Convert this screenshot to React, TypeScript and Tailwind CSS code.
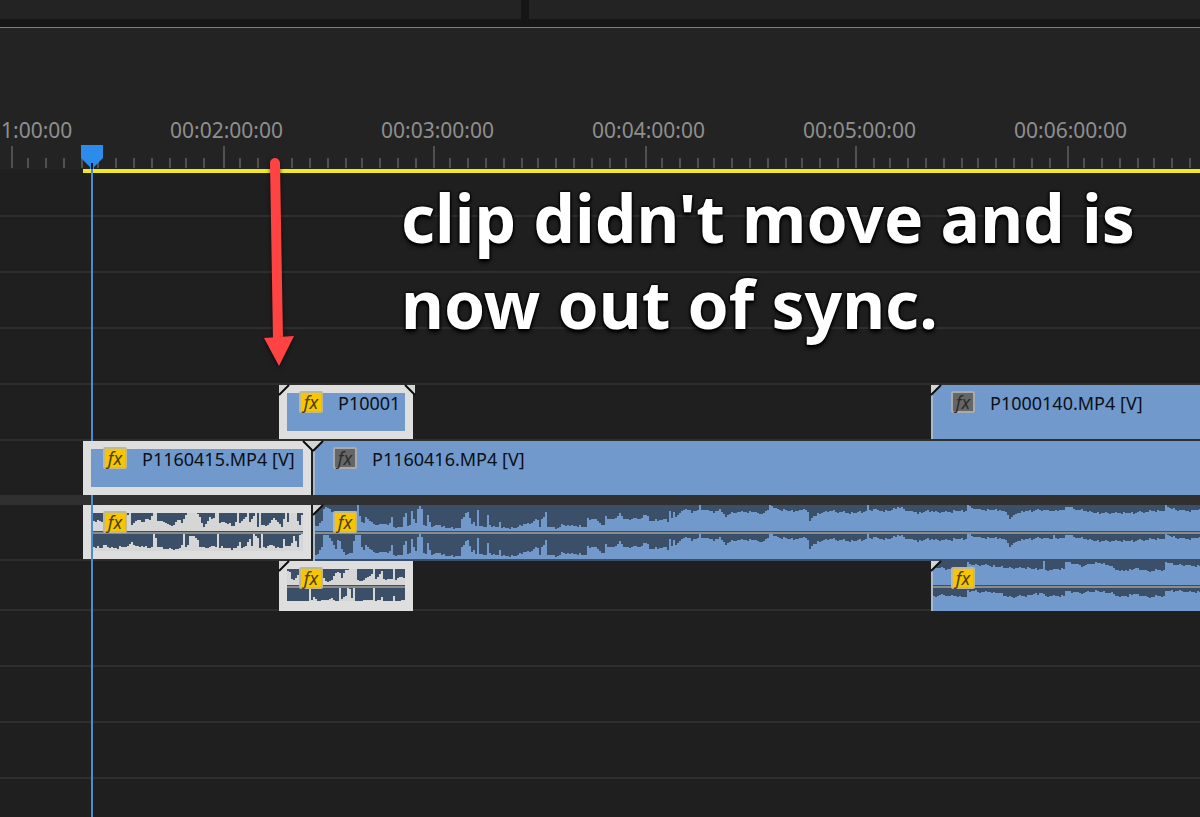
import React from 'react';

type Point = [number, number];

interface Wave {
  top: Point[];
  bottom: Point[];
}

const TIMECODES = ['00:02:00:00', '00:03:00:00', '00:04:00:00', '00:05:00:00', '00:06:00:00'];

// [timeline position, level] pairs for the two channels of each audio clip
const WAVE_1160415: Wave = {
  top: [
    [91, 8], [97, 11], [102, 8], [112, 12], [124, 10], [128, 18], [130, 18], [131, 6], [135, 10], [139, 11], [142, 8], [145, 12], [150, 11],
    [152, 18], [155, 18], [157, 10], [162, 10], [165, 8], [170, 5], [172, 4], [175, 9], [178, 12], [181, 8], [184, 14],
    [186, 18], [198, 18], [200, 10], [203, 4], [206, 8], [209, 14], [212, 11], [215, 18], [217, 18], [219, 8], [222, 9], [228, 7],
    [234, 5], [237, 18], [239, 8], [243, 12], [245, 14], [247, 18], [249, 9], [252, 14], [255, 18], [257, 4], [259, 18],
    [261, 6], [265, 5], [268, 7], [273, 13], [278, 8], [281, 4], [283, 12], [285, 18], [287, 9], [289, 18], [295, 18], [297, 10],
    [299, 6], [301, 16], [303, 18],
  ],
  bottom: [
    [91, 2], [97, 5], [100, 2], [104, 7], [108, 3], [115, 3], [122, 4], [128, 4], [130, 10], [134, 4], [140, 5], [148, 3],
    [151, 4], [153, 17], [155, 13], [157, 4], [165, 2], [178, 2], [181, 6], [183, 17], [185, 4], [187, 6], [189, 15], [193, 15],
    [197, 11], [199, 4], [206, 3], [211, 5], [215, 4], [217, 17], [219, 4], [230, 2], [236, 3], [239, 9], [241, 3], [245, 5],
    [249, 12], [251, 5], [253, 17], [257, 13], [259, 3], [261, 17], [263, 3], [270, 6], [275, 4], [281, 3], [283, 12],
    [285, 5], [290, 5], [293, 15], [297, 4], [299, 16], [301, 17], [303, 8],
  ],
};

const WAVE_1160416_TAIL: Point[] = [
  [365, 14], [368, 11], [372, 8], [376, 5], [380, 8], [382, 5], [384, 8], [386, 5], [390, 9], [391, 14], [393, 4], [401, 4], [403, 14],
  [405, 18], [407, 5], [409, 6], [411, 20], [413, 12], [415, 8], [417, 22], [419, 25], [421, 22], [423, 6], [425, 5], [427, 16],
  [429, 9], [431, 4], [439, 6], [446, 3], [459, 3], [461, 12], [463, 14], [465, 18], [467, 19], [469, 13], [471, 7],
  [473, 9], [475, 5], [477, 21], [479, 5], [485, 4], [487, 16], [489, 6], [491, 4], [497, 4], [499, 9], [501, 3], [515, 3],
  [523, 7], [530, 7], [535, 12], [537, 11], [539, 4], [541, 12], [543, 14], [545, 19], [547, 4], [558, 3], [561, 6],
  [575, 5], [585, 4], [587, 12], [595, 12], [598, 9], [600, 6], [603, 6], [605, 15], [607, 12], [612, 12], [616, 13], [619, 18],
  [621, 15], [624, 10], [626, 13], [630, 10], [632, 14], [640, 11], [644, 17], [647, 15], [649, 10], [660, 11],
  [665, 12], [667, 9], [669, 20], [671, 13], [673, 19], [675, 14], [677, 16], [680, 19], [684, 22], [690, 19], [697, 21],
  [699, 26], [701, 22], [707, 20], [716, 19], [719, 22], [722, 18], [725, 14], [730, 18], [740, 19], [755, 19],
  [760, 17], [766, 19], [769, 26], [773, 23], [780, 21], [790, 20], [800, 20], [804, 22], [807, 19], [809, 10],
  [812, 14], [818, 17], [828, 20], [850, 18], [862, 19], [865, 20], [867, 26], [869, 21], [875, 22], [880, 20], [890, 20],
  [897, 24], [900, 23], [906, 20], [920, 18], [925, 20], [940, 19], [965, 20], [967, 26], [971, 23], [980, 21],
  [995, 21], [1003, 20], [1006, 18], [1009, 12], [1014, 17], [1020, 19], [1040, 21], [1051, 20],
];

const WAVE_1160416_END: Point[] = [
  [1055, 20], [1063, 21], [1065, 25], [1074, 22], [1085, 20], [1095, 18], [1110, 18], [1130, 18], [1155, 20],
  [1163, 20], [1165, 26], [1170, 22], [1185, 20], [1201, 21],
];

const WAVE_1160416: Wave = {
  top: [
    [313, 4], [317, 5], [321, 10], [323, 22], [325, 24], [329, 22], [333, 16], [339, 18], [345, 6], [353, 14], [357, 26],
    [359, 15], [361, 9], [363, 8], ...WAVE_1160416_TAIL, ...WAVE_1160416_END,
  ],
  bottom: [
    [313, 3], [317, 5], [321, 12], [323, 24], [327, 24], [331, 18], [335, 10], [337, 19], [339, 18], [341, 10], [345, 4],
    [351, 6], [353, 18], [355, 24], [359, 24], [361, 12], [363, 9], ...WAVE_1160416_TAIL, [1053, 24], ...WAVE_1160416_END,
  ],
};

const WAVE_10001: Wave = {
  top: [
    [287, 14], [289, 13], [291, 6], [294, 5], [297, 10], [299, 14], [321, 10], [325, 4], [328, 3], [331, 5], [334, 11],
    [338, 14], [341, 7], [344, 15], [350, 16], [355, 16], [357, 5], [360, 3], [365, 7], [370, 9], [373, 16], [375, 5],
    [381, 14], [383, 5], [391, 6], [393, 16], [395, 5], [400, 9], [405, 5],
  ],
  bottom: [
    [287, 0], [307, 0], [309, 13], [311, 1], [313, 4], [317, 0], [331, 2], [337, 0], [339, 13], [341, 2], [345, 5], [347, 13],
    [349, 12], [351, 3], [353, 13], [355, 0], [371, 1], [373, 13], [375, 0], [379, 1], [381, 4], [383, 0], [391, 0], [393, 5], [395, 0], [405, 1],
  ],
};

const WAVE_1000140: Wave = {
  top: [
    [931, 15], [936, 17], [950, 16], [965, 16], [967, 23], [970, 20], [985, 20], [998, 18], [1010, 17], [1025, 17], [1035, 16],
    [1041, 16], [1043, 24], [1045, 15], [1063, 16], [1065, 23], [1073, 21], [1083, 19], [1095, 22], [1105, 21],
    [1112, 17], [1120, 14], [1130, 15], [1135, 17], [1145, 14], [1163, 15], [1165, 23], [1175, 20], [1201, 19],
  ],
  bottom: [
    [931, 14], [940, 16], [965, 14], [967, 20], [985, 19], [1000, 18], [1007, 14], [1025, 15], [1041, 18], [1045, 15],
    [1063, 15], [1065, 20], [1080, 18], [1095, 20], [1110, 18], [1120, 14], [1135, 17], [1145, 14], [1163, 15],
    [1165, 20], [1201, 19],
  ],
};

const NOISE = [0, 1, -1, 0, 0, 1, 0, -1, 0, 0, 1, 0, 0, -1, 1, 0, 0];

// stepped outline, one level every two pixels
function wavePath(points: Point[], base: number) {
  const start = points[0][0];
  const end = points[points.length - 1][0];
  let seg = 0;
  let d = `M0 ${base}`;
  for (let x = start, i = 0; x < end; x += 2, i++) {
    while (seg < points.length - 2 && points[seg + 1][0] <= x) seg++;
    const [ax, ah] = points[seg];
    const [bx, bh] = points[seg + 1];
    const noise = bx - ax > 5 && ah > 1 ? NOISE[i % NOISE.length] : 0;
    const level = Math.round(ah + ((bh - ah) * (x - ax)) / (bx - ax)) + noise;
    d += `V${base - level}H${x - start + 2}`;
  }
  return `${d}V${base}Z`;
}

interface WaveformProps {
  wave: Wave;
  middle: number;
  height: number;
  className: string;
}

function Waveform({ wave, middle, height, className }: WaveformProps) {
  return (
    <svg className={`absolute inset-0 w-full h-full ${className}`} shapeRendering="crispEdges" aria-hidden="true">
      <path d={wavePath(wave.top, middle - 1)} fill="currentColor" />
      <path d={wavePath(wave.bottom, height)} fill="currentColor" />
      <rect y={middle} width="100%" height="2" fill="#8b8b89" />
    </svg>
  );
}

function FxBadge({ active = false }: { active?: boolean }) {
  return (
    <button
      type="button"
      className={`flex items-center justify-center shrink-0 w-6 h-[22px] rounded-xs border-2 text-lg leading-4 italic ${
        active ? 'bg-[#f7c602] border-[#c2b88e] text-[#4a3f10]' : 'bg-[#666666] border-[#a9aaab] text-[#2c2c2c]'
      }`}
    >
      fx
    </button>
  );
}

function Corner({ side }: { side: 'left' | 'right' }) {
  return (
    <svg
      className={`absolute top-0 w-[10px] h-[10px] overflow-visible ${side === 'left' ? 'left-0' : '-right-[2px] -scale-x-100'}`}
      viewBox="0 0 10 10"
      aria-hidden="true"
    >
      <path d="M0 0H10L0 10Z" fill="#d4d4d4" />
      <path d="M0 10L10 0" stroke="#0c0c0c" strokeWidth="2" />
    </svg>
  );
}

interface ClipProps {
  name?: string;
  fx?: boolean;
  selected?: boolean;
  wave?: Wave;
  middle?: number;
  waveHeight?: number;
  corners?: ('left' | 'right')[];
  className: string;
}

function Clip({ name, fx, selected, wave, middle = 0, waveHeight = 0, corners = [], className }: ClipProps) {
  const body = wave ? 'bg-[#3c4f68]' : 'bg-[#7199cb]';

  return (
    <div className={`relative ${selected ? 'bg-[#dedede] p-2' : ''} ${className}`}>
      <div className={`relative h-full ${body}`}>
        {wave && (
          <Waveform
            wave={wave}
            middle={middle}
            height={waveHeight}
            className={selected ? 'text-[#d6d6d6]' : 'text-[#7199cb]'}
          />
        )}
      </div>
      {!selected && <div className="absolute inset-y-0 left-0 w-[2px] bg-[#a9b8cc]" />}
      <div className="absolute top-[6px] left-5 flex items-start gap-[15px]">
        <FxBadge active={fx} />
        {name && <span className="text-lg leading-6 text-[#0b0f16] whitespace-nowrap">{name}</span>}
      </div>
      {corners.map((side) => (
        <Corner key={side} side={side} />
      ))}
    </div>
  );
}

function Track({ children, className = 'h-14' }: { children?: React.ReactNode; className?: string }) {
  return <div className={`flex shrink-0 border-b-2 border-[#2f2f2f] ${className}`}>{children}</div>;
}

function Ruler() {
  const ticks = Array.from({ length: 140 }, (_, i) => ({
    x: i % 12 === 0 ? Math.round((i * 17.6 + 10) / 2) * 2 + 1 : Math.floor(i * 8.8 + 4.9) * 2 + 1,
    major: i % 12 === 0,
  }));

  return (
    <div className="pt-[90px] overflow-hidden">
      <div className="flex text-[21px] leading-6 text-[#8f8f8f]">
        <span className="w-[170px] shrink-0 pl-px">1:00:00</span>
        {TIMECODES.map((code) => (
          <span key={code} className="w-[211px] shrink-0">
            {code}
          </span>
        ))}
      </div>
      <svg className="block w-full h-[22px] mt-1 mb-px" shapeRendering="crispEdges" aria-hidden="true">
        {ticks.map(({ x, major }) => (
          <rect key={x} x={x} y={major ? 0 : 12} width="2" height={major ? 22 : 10} fill="#505050" />
        ))}
      </svg>
    </div>
  );
}

function Playhead() {
  return (
    <div className="absolute top-[118px] bottom-0 left-[81px] flex flex-col items-center">
      <svg className="shrink-0 w-[22px] h-6" viewBox="0 0 22 24" aria-hidden="true">
        <path d="M0 0H22V13L13 22V24H9V22L0 13Z" fill="#2d8ceb" />
        <path d="M11 18V24" stroke="#0b1a2c" strokeWidth="2" />
      </svg>
      <div className="w-[2px] grow bg-[#4a8ccd]" />
    </div>
  );
}

function Arrow() {
  return (
    <svg
      className="absolute top-[129px] left-[263px] w-8 h-[212px] drop-shadow-[0_2px_2px_rgba(0,0,0,0.6)]"
      viewBox="0 0 32 212"
      aria-hidden="true"
    >
      <path d="M12 7L15 184" stroke="#ff4242" strokeWidth="10" strokeLinecap="round" />
      <path d="M1 182L31 180L16 210Z" fill="#ff4242" />
    </svg>
  );
}

export default function App() {
  return (
    <div className="min-h-screen flex flex-col overflow-hidden bg-[#161616] font-['Noto_Sans',sans-serif]">
      <div className="flex gap-2 h-[19px] shrink-0">
        <div className="w-[521px] bg-[#232323]" />
        <div className="grow bg-[#232323]" />
      </div>

      <main className="relative grow flex flex-col mt-2 bg-[#232323]">
        <div className="h-px shrink-0 bg-[#3d8ed6]" />
        <Ruler />

        <div className="h-1 shrink-0 bg-[#202020] flex">
          <div className="ml-[83px] grow bg-[#f0e91f]" />
        </div>

        <div className="grow flex flex-col bg-[#1f1f1f]">
          <Track className="h-11" />
          <Track />
          <Track />
          <Track />
          <Track>
            <Clip name="P10001" fx selected corners={['left', 'right']} className="ml-[279px] w-[134px]" />
            <Clip name="P1000140.MP4 [V]" corners={['left']} className="ml-[518px] grow" />
          </Track>
          <div className="flex shrink-0 h-16 border-b-10 border-[#303030]">
            <Clip name="P1160415.MP4 [V]" fx selected corners={['right']} className="z-10 ml-[83px] w-[228px]" />
            <Clip name="P1160416.MP4 [V]" corners={['left']} className="ml-[2px] grow" />
          </div>
          <Track>
            <Clip fx selected wave={WAVE_1160415} middle={19} waveHeight={38} className="ml-[83px] w-[228px]" />
            <Clip
              fx
              wave={WAVE_1160416}
              middle={27}
              waveHeight={54}
              corners={['left']}
              className="ml-[2px] -mb-[2px] grow pb-[2px] bg-[#3c4f68]"
            />
          </Track>
          <Track className="h-[50px]">
            <Clip
              fx
              selected
              wave={WAVE_10001}
              middle={17}
              waveHeight={32}
              corners={['left']}
              className="-mb-[2px] ml-[279px] w-[134px] pb-[10px]"
            />
            <Clip
              fx
              wave={WAVE_1000140}
              middle={25}
              waveHeight={50}
              corners={['left']}
              className="ml-[518px] -mb-[2px] grow"
            />
          </Track>
          <Track />
          <Track />
          <Track />
          <div className="grow" />
        </div>

        <Playhead />
        <Arrow />
        <p className="absolute top-[147px] left-[401px] z-20 text-[66px] leading-[86px] font-bold text-white whitespace-nowrap [text-shadow:0_0_2px_#000,0_0_2px_#000,0_0_3px_#000,0_3px_4px_#000]">
          clip didn't move and is
          <br />
          now out of sync.
        </p>
      </main>
    </div>
  );
}
